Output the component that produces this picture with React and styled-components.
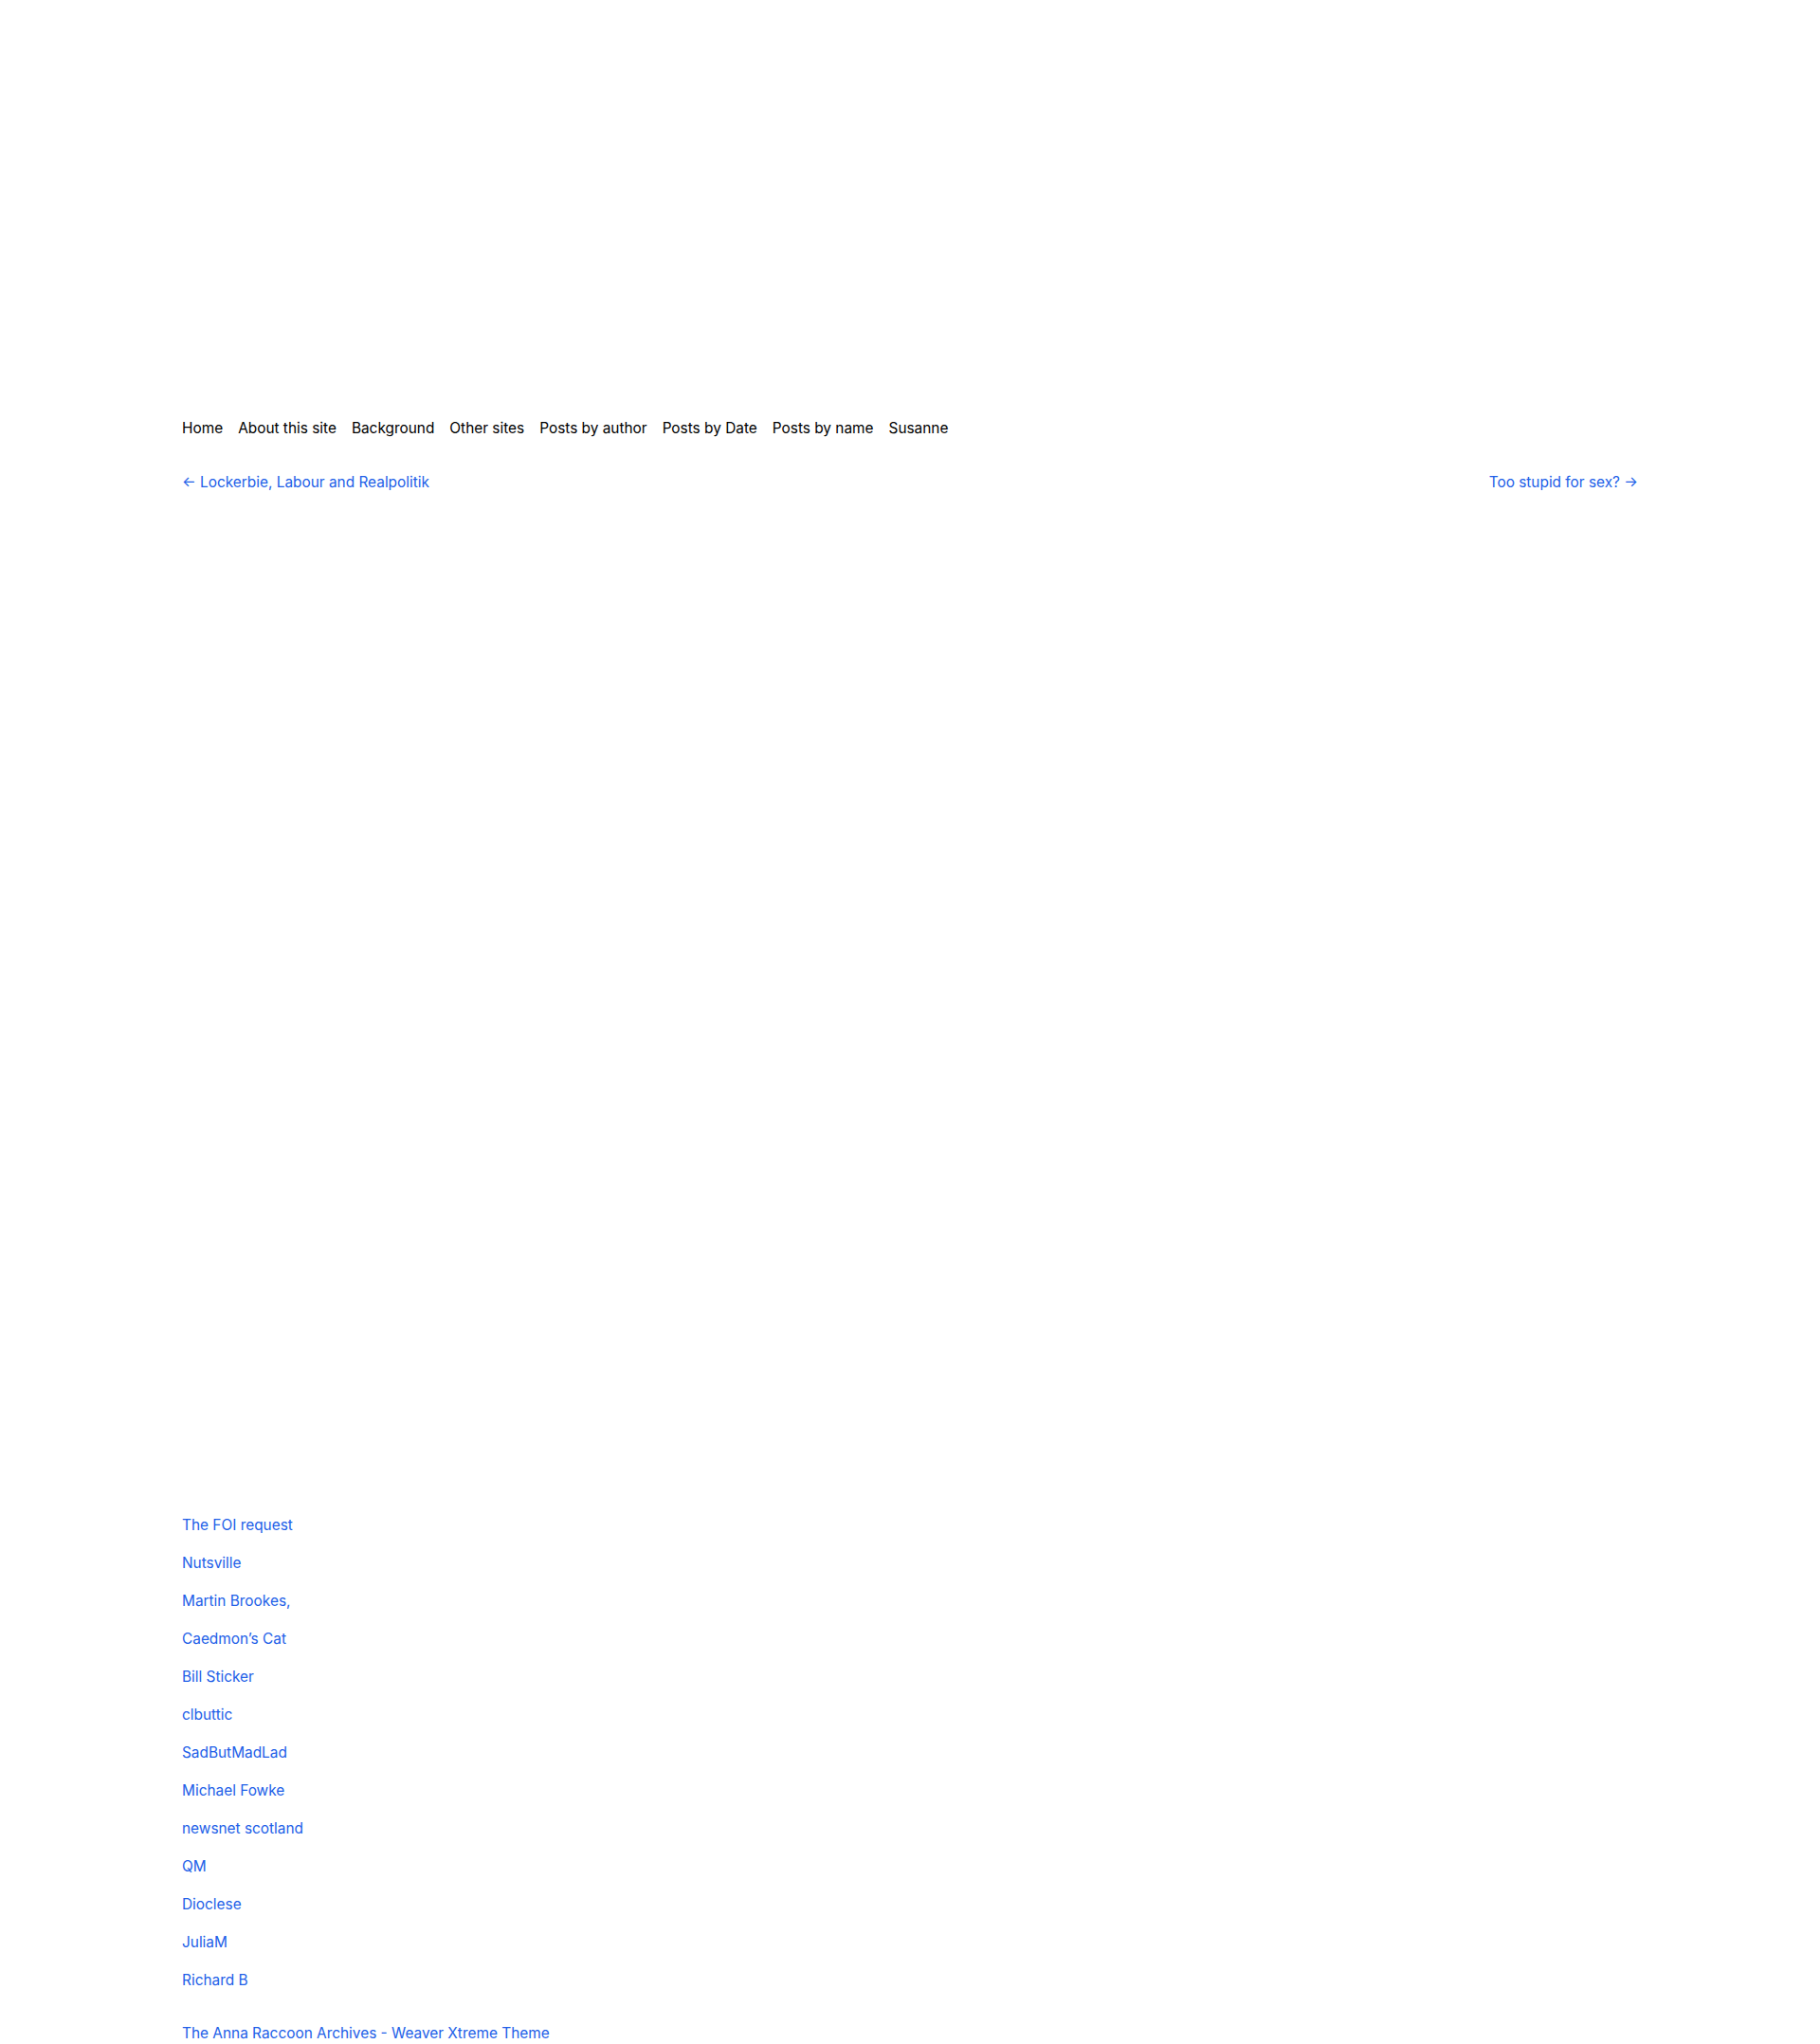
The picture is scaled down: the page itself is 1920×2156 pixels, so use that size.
import React from 'react';
import styled, { createGlobalStyle } from 'styled-components';

const GlobalStyle = createGlobalStyle`
  html, body {
    margin: 0;
    padding: 0;
    background: #ffffff;
  }
  body {
    font-family: Inter, "Liberation Sans", Arial, sans-serif;
    font-size: 15.4px;
    line-height: 24px;
    color: #000;
  }
`;

const Page = styled.div`
  max-width: 1536px;
  margin: 0 auto;
  min-height: 2156px;
  display: flex;
  flex-direction: column;
`;

const Header = styled.header`
  height: 440px;
`;

const Menu = styled.nav`
  display: flex;
  gap: 16px;
`;

const MenuLink = styled.a`
  color: #000;
  text-decoration: none;
`;

const PostNav = styled.div`
  display: flex;
  justify-content: space-between;
  margin-top: 33px;
`;

const Link = styled.a`
  color: #2160e8;
  text-decoration: none;
`;

const Content = styled.main`
  height: 1076px;
`;

const Blogroll = styled.ul`
  list-style: none;
  margin: 0;
  padding: 0;
  display: flex;
  flex-direction: column;
  gap: 16px;
`;

const Footer = styled.footer`
  margin-top: 32px;
`;

const menu = ['Home', 'About this site', 'Background', 'Other sites', 'Posts by author', 'Posts by Date', 'Posts by name', 'Susanne'];

const blogroll = [
  'The FOI request',
  'Nutsville',
  'Martin Brookes,',
  'Caedmon\u2019s Cat',
  'Bill Sticker',
  'clbuttic',
  'SadButMadLad',
  'Michael Fowke',
  'newsnet scotland',
  'QM',
  'Dioclese',
  'JuliaM',
  'Richard B',
];

export default function App() {
  return (
    <>
      <GlobalStyle />
      <Page>
        <Header />
        <Menu>
          {menu.map((m) => (
            <MenuLink key={m} href="#">{m}</MenuLink>
          ))}
        </Menu>
        <PostNav>
          <Link href="#">← Lockerbie, Labour and Realpolitik</Link>
          <Link href="#">Too stupid for sex? →</Link>
        </PostNav>
        <Content />
        <Blogroll>
          {blogroll.map((b) => (
            <li key={b}><Link href="#">{b}</Link></li>
          ))}
        </Blogroll>
        <Footer>
          <Link href="#">The Anna Raccoon Archives - Weaver Xtreme Theme</Link>
        </Footer>
      </Page>
    </>
  );
}
